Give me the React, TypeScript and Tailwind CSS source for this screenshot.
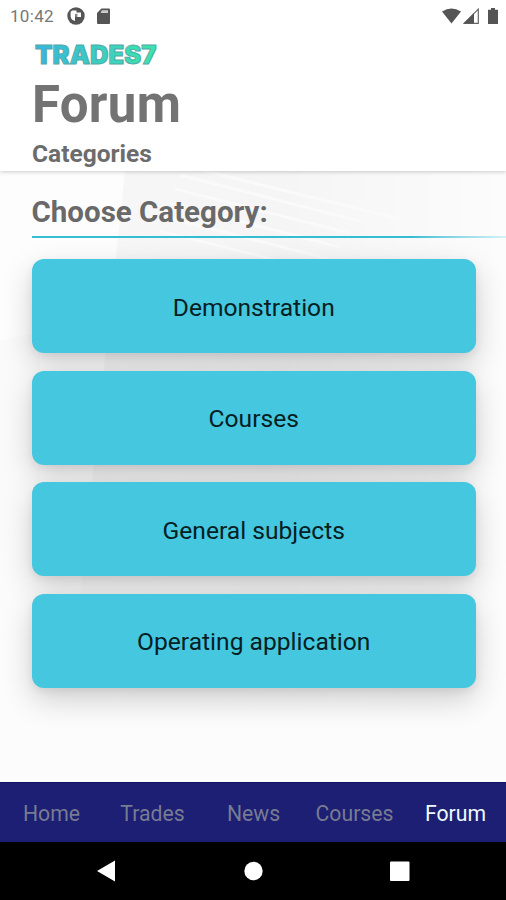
import { useState } from 'react';
import { clsx } from 'clsx';

const categories = ['Demonstration', 'Courses', 'General subjects', 'Operating application'];

const tabs = ['Home', 'Trades', 'News', 'Courses', 'Forum'];

function StatusBar() {
  return (
    <div className="flex h-8 shrink-0 items-center pl-[10px] pr-[8px] text-[#656565]">
      <span className="text-[17px] leading-none tracking-[0.3px] text-[#777]">10:42</span>
      <svg className="ml-[13px] h-[18px] w-[18px]" viewBox="0 0 18 18">
        <circle cx="9" cy="9" r="8.7" fill="#555" />
        <path d="M5 3.5h4.5v2h4.500v4.600h-4.400V7.200H8v6.800Q4 13 3.600 9.500V5z" fill="#fff" />
        <path d="M8 6.800h2.500v3H8z" fill="#888" />
      </svg>
      <svg className="ml-[12px] h-4 w-[13px]" viewBox="0 0 13 16">
        <path d="M4.4 0.5H12q1 0 1 1V15q0 1-1 1H1q-1 0-1-1V5z" fill="#555" />
        <path d="M4.8 2.2H11v2.8H3.600z" fill="#ccc" />
      </svg>
      <svg className="ml-auto h-4 w-[19px]" viewBox="0 0 19 16">
        <path d="M0 3.6Q9.5-2.6 19 3.6L9.5 15.5z" fill="#555" />
      </svg>
      <svg className="ml-[2px] h-4 w-4" viewBox="0 0 16 16">
        <path d="M15.3 1.2V15.300H1.200z" fill="#fff" stroke="#666" strokeWidth="1.2" />
        <path d="M11 5V15.5H0.5z" fill="#555" />
      </svg>
      <svg className="ml-[9px] h-4 w-[10px]" viewBox="0 0 10 16">
        <path d="M3 0h4v1.8h3V16H0V1.8h3z" fill="#555" />
      </svg>
    </div>
  );
}

function Logo() {
  return (
    <svg className="h-7 w-[136px] overflow-visible" viewBox="0 0 136 28">
      <defs>
        <linearGradient id="logo" x1="0" x2="1" y1="0" y2="0">
          <stop offset="0" stopColor="#36b6df" />
          <stop offset="1" stopColor="#3de5a5" />
        </linearGradient>
      </defs>
      <text
        x="3"
        y="23"
        textLength="121.5"
        lengthAdjust="spacingAndGlyphs"
        fill="url(#logo)"
        stroke="#55a9ac"
        strokeWidth="1"
        className="font-['Inter'] text-[25.5px] font-black"
      >
        TRADES7
      </text>
    </svg>
  );
}

// Faint building facade behind the list
function Backdrop() {
  return (
    <svg className="absolute inset-0 -z-10 h-full w-full" viewBox="0 0 506 610" preserveAspectRatio="none">
      <defs>
        <linearGradient id="facade" x1="0" x2="1" y1="0" y2="0">
          <stop offset="0" stopColor="#f7f7f7" />
          <stop offset="0.5" stopColor="#f5f5f5" />
          <stop offset="1" stopColor="#fcfcfc" />
        </linearGradient>
        <linearGradient id="fade" x1="0" x2="0" y1="0" y2="1">
          <stop offset="0.5" stopColor="#fcfcfc" stopOpacity="0" />
          <stop offset="0.9" stopColor="#fcfcfc" />
        </linearGradient>
      </defs>
      <path d="M125 0H506V610H60z" fill="url(#facade)" />
      <path d="M0 170L40 160V610H0z" fill="#fafafa" />
      <path
        d="M180 4L360 50M175 18L350 62M170 32L340 76M165 46L330 88M160 60L320 100M205 0L400 48"
        stroke="#fafafa"
        strokeWidth="3"
      />
      <path d="M0 0H506V610H0z" fill="url(#fade)" />
    </svg>
  );
}

export default function App() {
  const [activeTab, setActiveTab] = useState('Forum');

  return (
    <div className="flex h-[900px] w-[506px] flex-col overflow-hidden bg-white font-['Roboto',sans-serif]">
      {/* Header */}
      <header className="z-10 flex h-[171px] shrink-0 flex-col bg-white shadow-[0_1px_4px_rgba(0,0,0,0.2)]">
        <StatusBar />
        <div className="flex flex-col pl-8 pt-[9px]">
          <Logo />
          <h1 className="mt-[10px] text-[51px] font-bold leading-[52px] tracking-[0.3px] text-[#737373]">Forum</h1>
          <h2 className="mt-[9px] text-[24.5px] font-bold leading-7 text-[#6c6c6c]">Categories</h2>
        </div>
      </header>

      {/* Category list */}
      <main className="relative isolate flex-1 bg-[#fdfdfd] pl-[31.5px]">
        <Backdrop />
        <h3 className="pt-[23px] text-[29.5px] font-bold leading-[36px] text-[#696969]">Choose Category:</h3>
        <div className="mt-[6px] h-[2px] bg-linear-to-r from-[#35bdd4] from-80% to-[#d5f3f8]" />
        <div className="mr-[30px] mt-[21px] flex flex-col gap-[17.5px]">
          {categories.map((category) => (
            <button
              key={category}
              className="h-[94px] rounded-[12px] bg-[#44c7df] pt-[4px] text-[24.6px] text-[#071e23] shadow-[0_12px_30px_rgba(0,0,0,0.18),0_3px_8px_rgba(0,0,0,0.07)]"
            >
              {category}
            </button>
          ))}
        </div>
      </main>

      {/* Bottom tabs */}
      <nav className="z-10 flex h-[60px] shrink-0 border-t border-[#101363] bg-[#1c1f73] pl-px">
        {tabs.map((tab) => (
          <button
            key={tab}
            onClick={() => setActiveTab(tab)}
            className={clsx(
              'flex-1 basis-0 pt-[2px] text-[21.2px]',
              activeTab === tab ? 'text-[#eefaff]' : 'text-[#777b91]'
            )}
          >
            {tab}
          </button>
        ))}
      </nav>

      {/* Android navigation */}
      <div className="flex h-[58px] shrink-0 items-center bg-black">
        <svg className="h-full w-full" viewBox="0 0 506 58" fill="#fff">
          <path d="M97 29L115 18.5V39.5z" />
          <circle cx="253.5" cy="29" r="9.2" />
          <rect x="390" y="19.5" width="19.5" height="19.5" rx="1" />
        </svg>
      </div>
    </div>
  );
}
